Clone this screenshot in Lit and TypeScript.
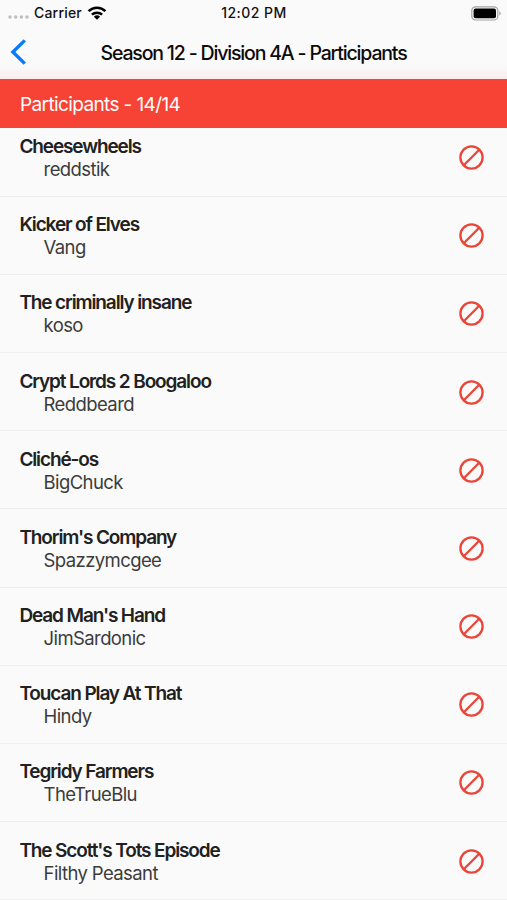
import { LitElement, html, css } from "lit";
import { customElement } from "lit/decorators.js";

interface Participant {
  team: string;
  owner: string;
}

const participants: Participant[] = [
  { team: "Cheesewheels", owner: "reddstik" },
  { team: "Kicker of Elves", owner: "Vang" },
  { team: "The criminally insane", owner: "koso" },
  { team: "Crypt Lords 2 Boogaloo", owner: "Reddbeard" },
  { team: "Cliché-os", owner: "BigChuck" },
  { team: "Thorim's Company", owner: "Spazzymcgee" },
  { team: "Dead Man's Hand", owner: "JimSardonic" },
  { team: "Toucan Play At That", owner: "Hindy" },
  { team: "Tegridy Farmers", owner: "TheTrueBlu" },
  { team: "The Scott's Tots Episode", owner: "Filthy Peasant" },
];

@customElement("app-root")
export class AppRoot extends LitElement {
  static styles = css`
    :host {
      display: flex;
      flex-direction: column;
      height: 900px;
      overflow: hidden;
      background: #fafafa;
      color: #212121;
      font-family: Inter, "Liberation Sans", sans-serif;
      white-space: nowrap;
    }
    svg {
      display: block;
    }
    .status {
      flex: none;
      display: grid;
      grid-template-columns: 1fr auto 1fr;
      align-items: center;
      height: 26px;
      padding: 0 6px 0 8px;
      font-size: 14px;
      line-height: 26px;
      font-weight: 500;
      letter-spacing: 0.2px;
      color: #111;
    }
    .carrier {
      display: flex;
      align-items: center;
      gap: 5px;
    }
    .dots {
      margin-top: 8px;
    }
    .time {
      letter-spacing: 0.45px;
      margin-right: 1px;
    }
    .battery {
      justify-self: end;
    }
    .nav {
      flex: none;
      display: grid;
      grid-template-columns: 40px 1fr 40px;
      align-items: center;
      height: 53px;
      background: linear-gradient(#fafafa 75%, #f9ecec);
    }
    .back {
      margin: -1px 0 0 10px;
    }
    .heading {
      margin: 0;
      text-align: center;
      font-size: 19.5px;
      line-height: 26px;
      font-weight: 550;
      letter-spacing: -1.17px;
      color: #0b0b0b;
    }
    .banner {
      flex: none;
      box-sizing: border-box;
      height: 48.5px;
      padding-left: 20px;
      background: #f64336;
      color: #fff;
      font-size: 19px;
      line-height: 51px;
      letter-spacing: -0.62px;
    }
    .list {
      flex: 1;
      min-height: 0;
      overflow: hidden;
    }
    .rows {
      margin: -9px 0 0;
      padding: 0;
      list-style: none;
    }
    .row {
      box-sizing: border-box;
      display: flex;
      align-items: center;
      justify-content: space-between;
      height: 78.2px;
      padding: 0.8px 23px 0 19.4px;
      border-bottom: 1px solid #efefef;
    }
    .team {
      padding-top: 1px;
      font-size: 19px;
      line-height: 23px;
      font-weight: 600;
      letter-spacing: -1.12px;
    }
    .owner {
      padding-left: 24.2px;
      font-size: 18.5px;
      line-height: 23px;
      letter-spacing: -0.6px;
      color: #3c3c3c;
    }
  `;

  render() {
    return html`
      <div class="status">
        <div class="carrier">
          <svg class="dots" width="21" height="4" viewBox="0 0 21 4" fill="#bdbdbd">
            <circle cx="2" cy="2" r="1.7" />
            <circle cx="7.7" cy="2" r="1.7" />
            <circle cx="13.4" cy="2" r="1.7" />
            <circle cx="19" cy="2" r="1.7" />
          </svg>
          <span>Carrier</span>
          <svg width="20" height="14" viewBox="0 0 20 14" fill="none" stroke="#000" stroke-width="2.5">
            <path d="M1.6 5.2a12 12 0 0 1 16.8 0" />
            <path d="M4.9 8.7a7.4 7.4 0 0 1 10.2 0" />
            <path d="M10 13.7 6.9 10.7a4.5 4.5 0 0 1 6.2 0z" fill="#000" stroke="none" />
          </svg>
        </div>
        <span class="time">12:02 PM</span>
        <svg class="battery" width="30" height="15" viewBox="0 0 30 15">
          <rect x="0.8" y="0.8" width="26" height="13.2" rx="3.8" fill="none" stroke="#a3a3a3" stroke-width="1.2" />
          <rect x="2.6" y="2.6" width="22.4" height="9.6" rx="2" />
          <path d="M28.3 5.2q3 2.2 0 4.4z" fill="#a3a3a3" />
        </svg>
      </div>
      <div class="nav">
        <svg class="back" width="18" height="26" viewBox="0 0 18 26" fill="none" stroke="#087cf8" stroke-width="3.4">
          <path d="M14.8 1.4 2.9 13 14.8 24.6" />
        </svg>
        <h1 class="heading">Season 12 - Division 4A - Participants</h1>
      </div>
      <div class="banner">Participants - 14/14</div>
      <div class="list">
        <ul class="rows">
          ${participants.map(
            (p) => html`
              <li class="row">
                <div>
                  <div class="team">${p.team}</div>
                  <div class="owner">${p.owner}</div>
                </div>
                <svg width="25" height="25" viewBox="0 0 25 25" fill="none" stroke="#ea4538" stroke-width="2.3">
                  <circle cx="12.5" cy="12.5" r="11.1" />
                  <path d="M4.8 20.2 20.2 4.8" />
                </svg>
              </li>
            `
          )}
        </ul>
      </div>
    `;
  }
}
